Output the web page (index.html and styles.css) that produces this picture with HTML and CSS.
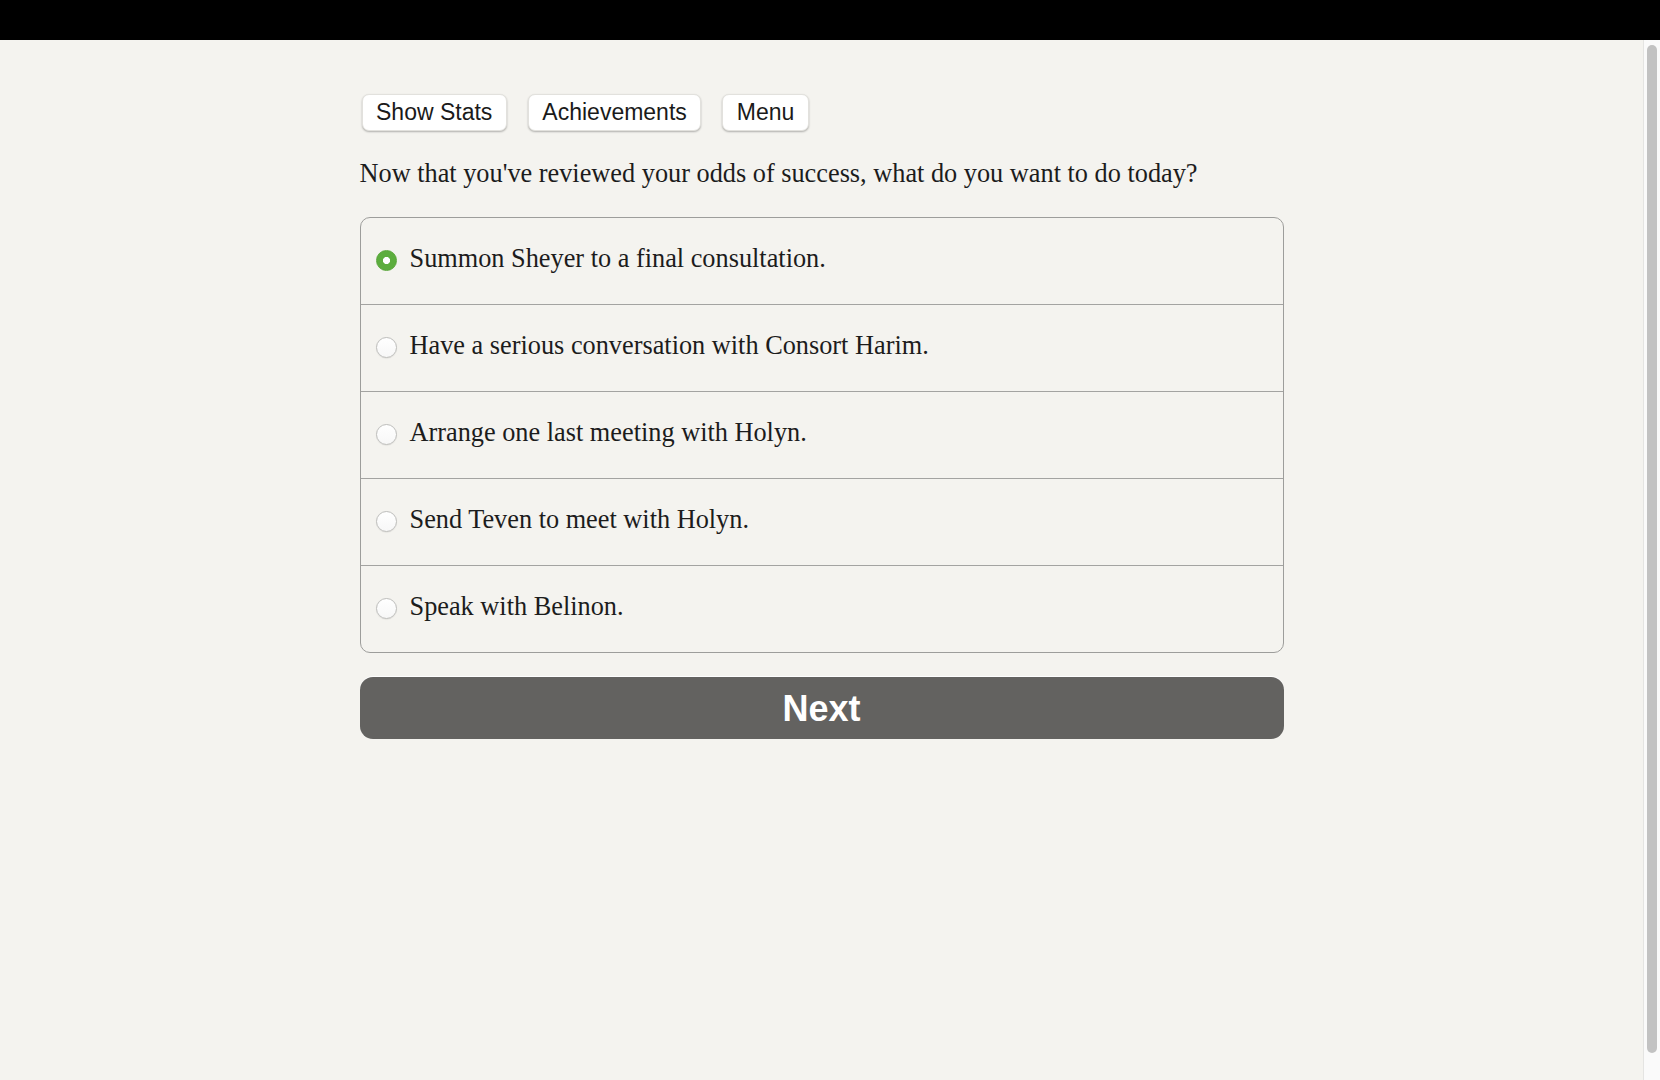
FILE: index.html
```html
<!DOCTYPE html>
<html lang="en">
<head>
<meta charset="utf-8">
<title>Choice</title>
<link rel="stylesheet" href="styles.css">
</head>
<body>
<div class="topbar"></div>
<div class="viewport">
  <div class="content">
    <main class="page">
      <nav class="toolbar">
        <button class="tool-btn" type="button">Show Stats</button>
        <button class="tool-btn" type="button">Achievements</button>
        <button class="tool-btn" type="button">Menu</button>
      </nav>
      <p class="question">Now that you've reviewed your odds of success, what do you want to do today?</p>
      <form class="choices">
        <label class="choice">
          <span class="radio selected"></span>
          <span class="choice-text">Summon Sheyer to a final consultation.</span>
        </label>
        <label class="choice">
          <span class="radio"></span>
          <span class="choice-text">Have a serious conversation with Consort Harim.</span>
        </label>
        <label class="choice">
          <span class="radio"></span>
          <span class="choice-text">Arrange one last meeting with Holyn.</span>
        </label>
        <label class="choice">
          <span class="radio"></span>
          <span class="choice-text">Send Teven to meet with Holyn.</span>
        </label>
        <label class="choice">
          <span class="radio"></span>
          <span class="choice-text">Speak with Belinon.</span>
        </label>
      </form>
      <button class="next-btn" type="button">Next</button>
    </main>
  </div>
  <div class="scrollbar"><div class="scroll-thumb"></div></div>
</div>
</body>
</html>
```

FILE: styles.css
```css
html, body {
  margin: 0;
  padding: 0;
  height: 100%;
  overflow: hidden;
  background: #f4f3ef;
}

.topbar {
  height: 40px;
  background: #000;
}

.viewport {
  display: flex;
  height: 1040px;
}

.content {
  flex: 1;
  min-width: 0;
  overflow: hidden;
  background: #f4f3ef;
}

.scrollbar {
  box-sizing: border-box;
  flex: none;
  width: 17px;
  display: flex;
  flex-direction: column;
  padding: 5px 3px 27px 3px;
  background: #fafafa;
  border-left: 1px solid #e4e4e2;
}

.scroll-thumb {
  flex: 1;
  background: #c2c2c2;
  border-radius: 5px;
}

.page {
  box-sizing: border-box;
  width: 924px;
  margin: 0 auto;
  padding-top: 54px;
  color: #1c1c1c;
}

.toolbar {
  display: flex;
  gap: 21px;
  height: 37px;
}

.tool-btn {
  box-sizing: border-box;
  height: 37px;
  padding: 0 13.5px;
  margin: 0 0 0 2px;
  font-family: "Liberation Sans", Arial, sans-serif;
  font-size: 23px;
  line-height: 35px;
  color: #1a1a1a;
  background: #fff;
  border: 1px solid #e2e1dd;
  border-radius: 7px;
  box-shadow: 0 1px 2px rgba(0, 0, 0, 0.28);
}

.tool-btn + .tool-btn {
  margin-left: 0;
}

.question {
  margin: 28px 0 28px;
  font-family: "Liberation Serif", "Times New Roman", serif;
  font-size: 26.3px;
  line-height: 30px;
}

.choices {
  margin: 0;
  border: 1px solid #9d9d9b;
  border-radius: 10px;
  overflow: hidden;
}

.choice {
  display: flex;
  align-items: center;
  gap: 13px;
  padding: 26px 15px 30px;
  border-bottom: 1px solid #a3a3a1;
}

.choice:last-child {
  border-bottom: none;
}

.radio {
  box-sizing: border-box;
  flex: none;
  width: 21px;
  height: 21px;
  border-radius: 50%;
  background: linear-gradient(#ffffff, #f7f7f7);
  border: 1px solid #bebebc;
  box-shadow: 0 0.5px 1px rgba(0, 0, 0, 0.1);
  margin-top: 3px;
}

.radio.selected {
  background: radial-gradient(circle, #ffffff 0, #ffffff 3.2px, #5cad3e 3.9px);
  border: 1px solid #56a537;
  box-shadow: none;
}

.choice-text {
  font-family: "Liberation Serif", "Times New Roman", serif;
  font-size: 26.3px;
  line-height: 30px;
}

.next-btn {
  display: block;
  box-sizing: border-box;
  width: 100%;
  height: 62px;
  margin-top: 24px;
  padding: 0;
  font-family: "Liberation Sans", Arial, sans-serif;
  font-weight: bold;
  font-size: 36px;
  line-height: 64px;
  color: #fff;
  background: #636260;
  border: none;
  border-radius: 13px;
  box-shadow: 0 -1px 0 rgba(255, 255, 255, 0.9);
}
```
